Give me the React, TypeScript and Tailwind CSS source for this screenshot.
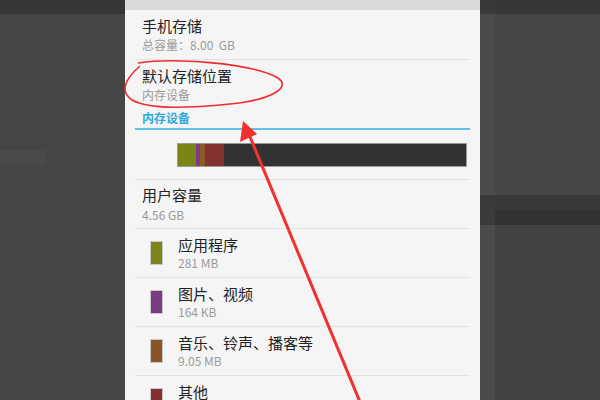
import React from "react";

const font = { fontFamily: '"Noto Sans CJK SC", "Noto Sans", sans-serif' };

function Row({ color, title, sub, last }: { color: string; title: string; sub: string; last?: boolean }) {
  return (
    <div className="flex shrink-0 flex-col">
      <div className="flex h-[48px] shrink-0">
        <div className="ml-[25px] mt-[12px] h-[24px] w-[13px] shrink-0 border border-[#c9c9c9]" style={{ backgroundColor: color }} />
        <div className="ml-[15px] flex flex-col pt-[7px]">
          <div className="text-[15px] leading-[18px] text-[#222]">{title}</div>
          <div className="mt-[1px] text-[12px] leading-[16px] text-[#9a9a9a]">{sub}</div>
        </div>
      </div>
      {!last && <div className="mx-[10px] h-px shrink-0 bg-[#e3e3e3]" />}
    </div>
  );
}

export default function App() {
  return (
    <div className="relative flex h-[400px] w-[600px] overflow-hidden bg-[#454545]" style={font}>
      <div className="flex w-[125px] flex-col">
        <div className="h-[14px] shrink-0 bg-[#363636]" />
        <div className="flex-1 bg-[#464646]">
          <div className="mt-[136px] flex">
            <div className="h-[15px] w-[45px] bg-[#4a4a4a]" />
          </div>
        </div>
      </div>

      <div className="flex w-[355px] flex-col overflow-hidden bg-[#f5f5f5] [&>*]:shrink-0">
        <div className="h-[10px] bg-[#dadada]" />
        <div className="flex h-[49px] flex-col pl-[17px] pt-[7px]">
          <div className="text-[15px] leading-[18px] text-[#222]">手机存储</div>
          <div className="mt-[2px] text-[12px] leading-[16px] text-[#9a9a9a]">总容量：8.00&nbsp;&nbsp;GB</div>
        </div>
        <div className="mx-[10px] h-px bg-[#e3e3e3]" />
        <div className="flex flex-col pl-[17px] pt-[7px]">
          <div className="text-[15px] leading-[18px] text-[#222]">默认存储位置</div>
          <div className="mt-[2px] text-[12px] leading-[16px] text-[#9a9a9a]">内存设备</div>
          <div className="mt-[7px] text-[12px] font-bold leading-[16px] text-[#2fa9dd]">内存设备</div>
        </div>
        <div className="mx-[10px] mt-[2px] h-[2px] bg-[#5ec1ea]" />
        <div className="ml-[52px] mt-[13px] flex h-[24px] w-[290px] border border-[#9a9a9a] bg-[#323232]">
          <div className="w-[18px] bg-[#7a8417]" />
          <div className="w-[4px] bg-[#7e3a85]" />
          <div className="w-[5px] bg-[#8b5a25]" />
          <div className="w-[19px] bg-[#833131]" />
        </div>
        <div className="mx-[10px] mt-[12px] h-px bg-[#e3e3e3]" />
        <div className="flex h-[48px] flex-col pl-[17px] pt-[6px]">
          <div className="text-[15px] leading-[18px] text-[#222]">用户容量</div>
          <div className="mt-[3px] text-[12px] leading-[16px] text-[#9a9a9a]">4.56 GB</div>
        </div>
        <div className="ml-[10px] mr-[10px] h-px bg-[#e3e3e3]" />
        <Row color="#7b8519" title="应用程序" sub="281 MB" />
        <Row color="#7b3a86" title="图片、视频" sub="164 KB" />
        <Row color="#8a5526" title="音乐、铃声、播客等" sub="9.05 MB" />
        <Row color="#823032" title="其他" sub="" last />
      </div>

      <div className="flex flex-1">
        <div className="flex w-[15px] flex-col bg-[#4b4b4b]">
          <div className="h-[14px] shrink-0 bg-[#393939]" />
          <div className="mt-[181px] h-[30px] shrink-0 bg-[#3a3a3a]" />
        </div>
        <div className="flex flex-1 flex-col">
          <div className="h-[14px] shrink-0 bg-[#363636]" />
          <div className="h-[181px] shrink-0 bg-[#464646]" />
          <div className="h-[15px] shrink-0 bg-[#383838]" />
          <div className="h-[15px] shrink-0 bg-[#333333]" />
          <div className="flex-1 bg-[#434343]" />
        </div>
      </div>

      <svg className="pointer-events-none absolute left-0 top-0" width="600" height="400" viewBox="0 0 600 400">
        <path
          d="M138 63 C 170 58, 250 62, 278 78 C 292 88, 270 100, 230 104 C 190 108, 150 110, 132 100 C 120 92, 124 80, 140 66"
          fill="none"
          stroke="#f22a2a"
          strokeWidth="1.6"
        />
        <line x1="360" y1="402" x2="248" y2="132" stroke="#f23030" strokeWidth="3" />
        <polygon points="243,121 240,142 257,134" fill="#f23030" />
      </svg>
    </div>
  );
}
